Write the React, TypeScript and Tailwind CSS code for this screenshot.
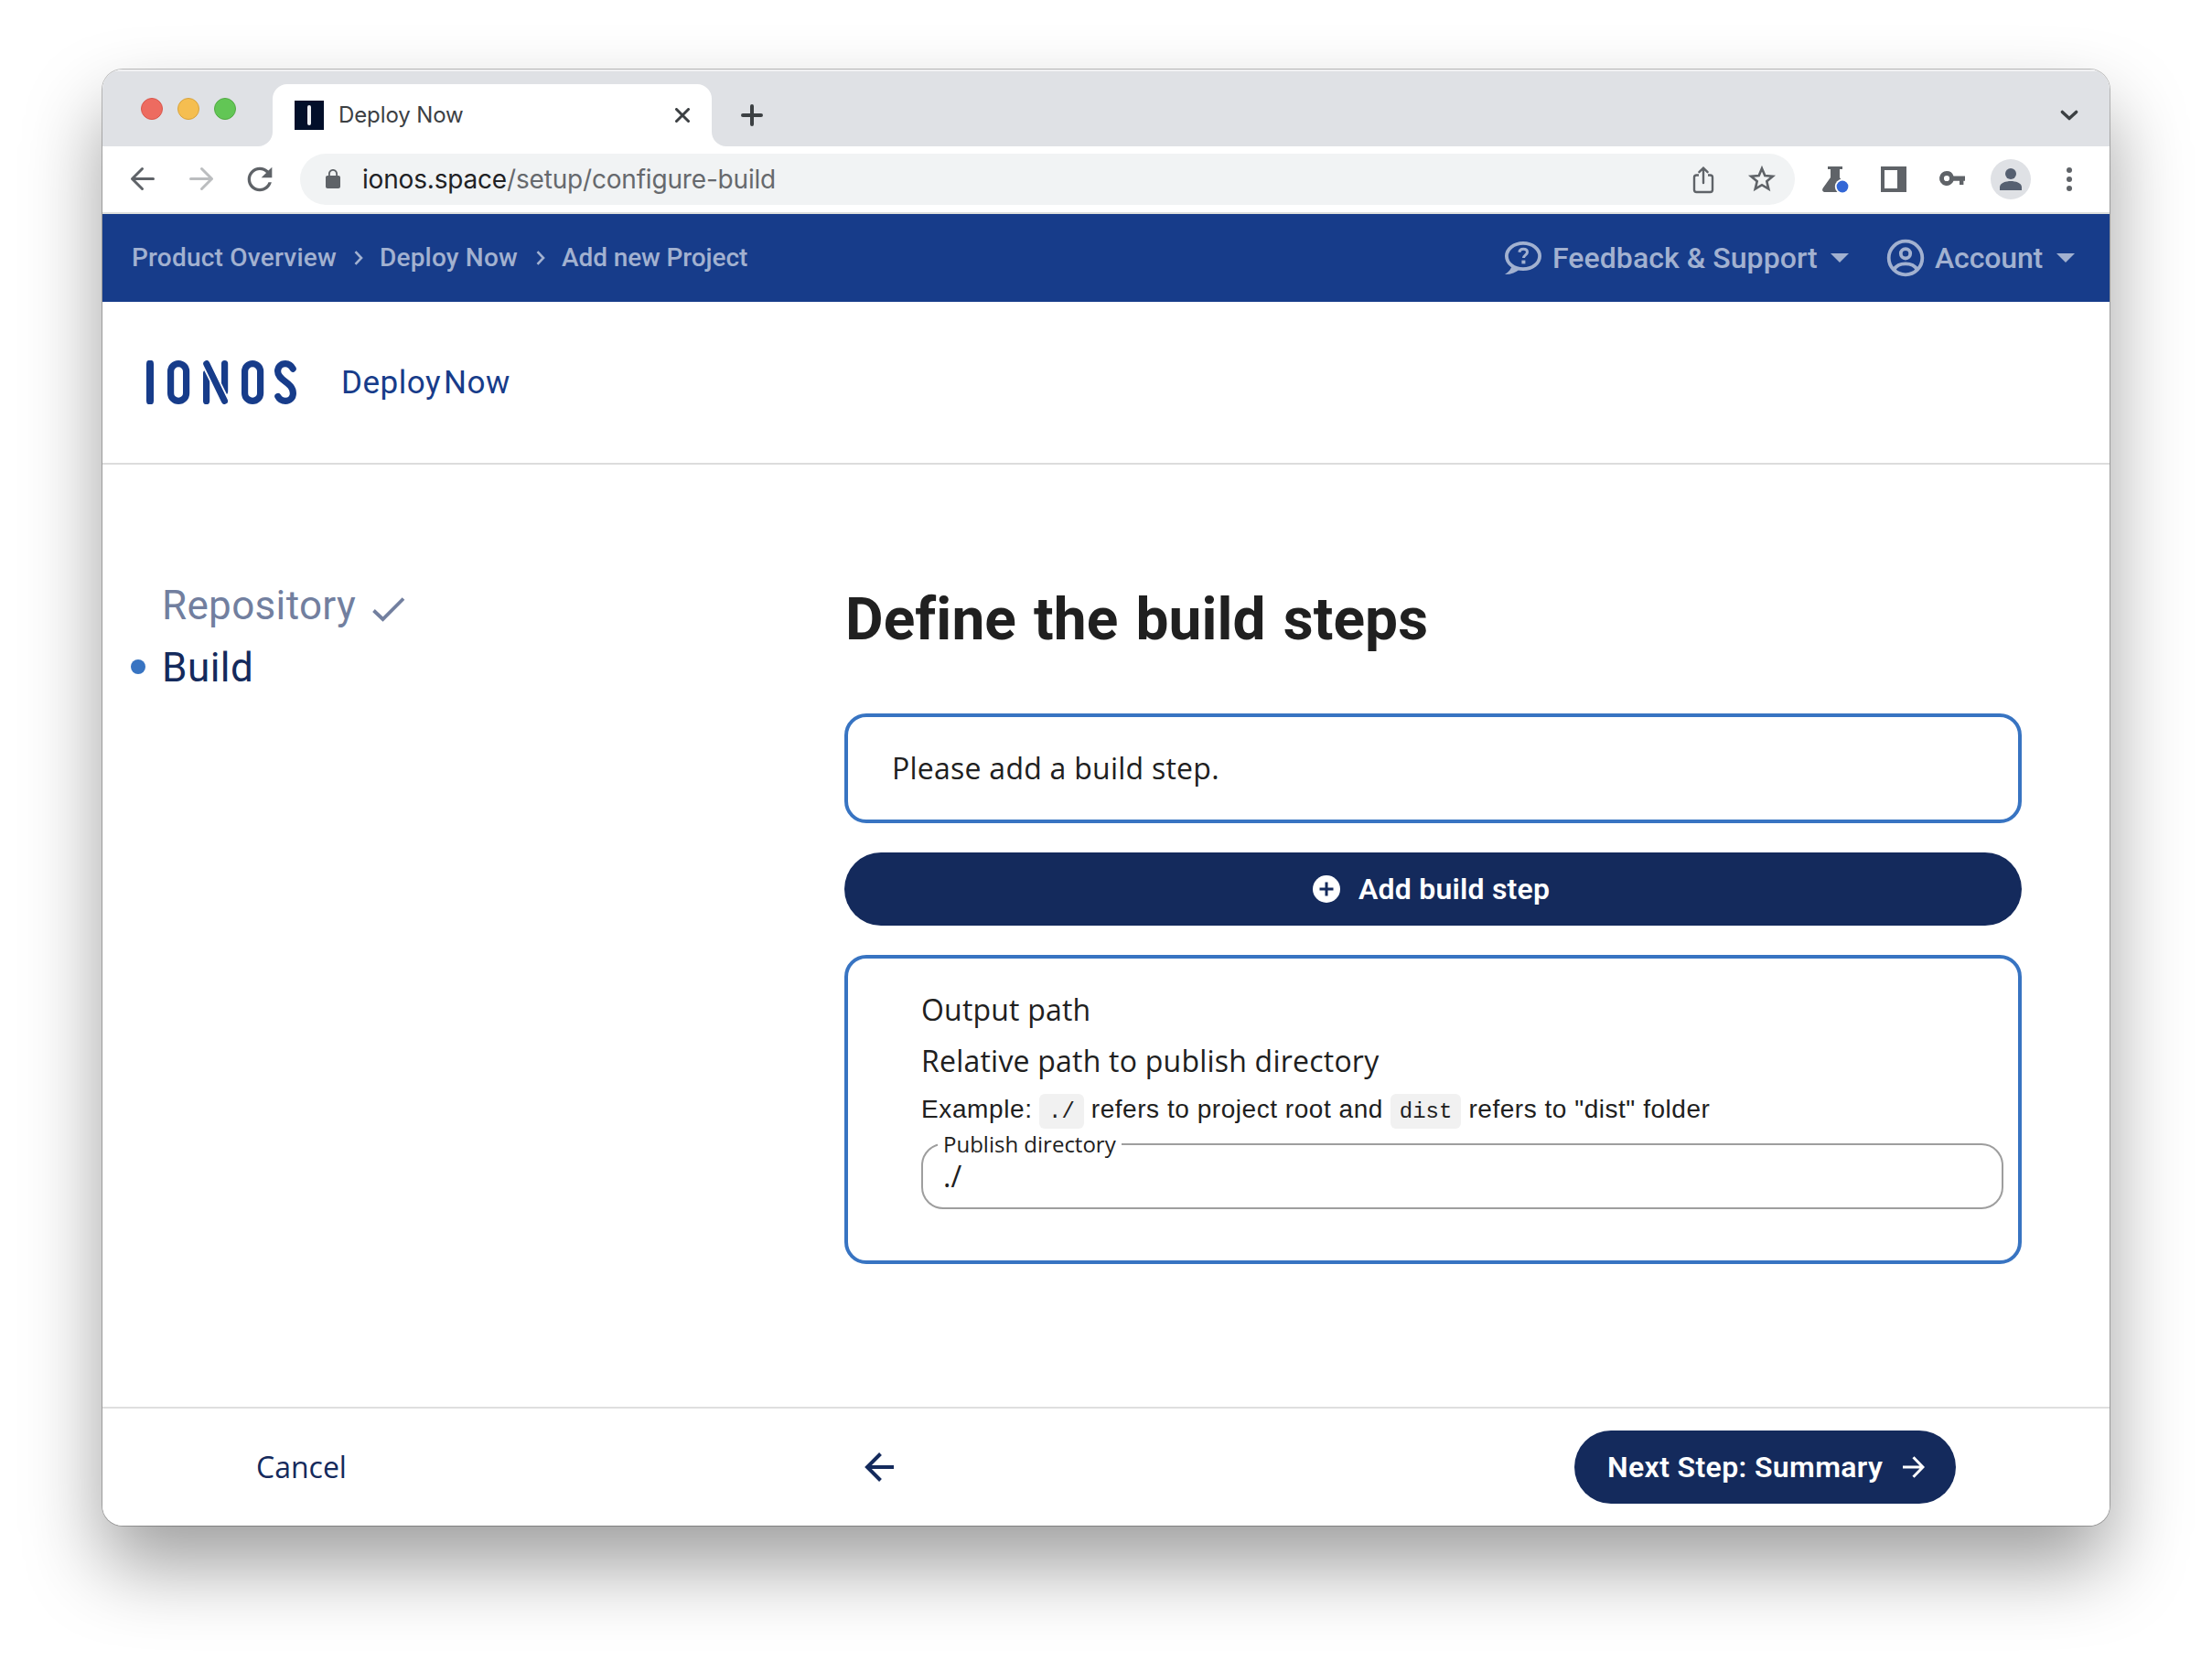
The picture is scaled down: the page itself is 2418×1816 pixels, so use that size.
import type { ReactNode } from "react";

function Glyph({ children, className = "" }: { children: ReactNode; className?: string }) {
  return (
    <svg viewBox="0 0 40 40" fill="none" className={`h-10 w-10 shrink-0 ${className}`}>
      {children}
    </svg>
  );
}

function Caret() {
  return (
    <svg viewBox="0 0 20 10" className="h-[10px] w-[20px] shrink-0" fill="currentColor">
      <path d="M0 0h20L10 10z" />
    </svg>
  );
}

function TabStrip() {
  return (
    <div className="flex h-[84px] items-end bg-[#dfe1e5] shadow-[inset_0_2px_0_rgba(255,255,255,0.55)]">
      <div className="mb-[29px] ml-[42px] flex gap-4">
        <span className="h-6 w-6 rounded-full border border-[#d9574c] bg-[#ed6b60]" />
        <span className="h-6 w-6 rounded-full border border-[#d8a33c] bg-[#f5be50]" />
        <span className="h-6 w-6 rounded-full border border-[#52a943] bg-[#62c655]" />
      </div>
      <svg viewBox="0 0 16 16" className="ml-[24px] h-4 w-4 shrink-0" fill="#fff">
        <path d="M16 0v16H0A16 16 0 0 0 16 0z" />
      </svg>
      <div className="flex h-[68px] w-[480px] items-center rounded-t-2xl bg-white pl-6">
        <div className="flex h-8 w-8 items-center justify-center bg-[#020f2a]">
          <span className="h-[22px] w-[4px] rounded-full bg-[#eef0f4]" />
        </div>
        <span className="ml-[16px] w-[368px] font-['Inter'] text-[24px] tracking-[-0.1px] text-[#3c4043]">Deploy Now</span>
        <svg viewBox="0 0 16 16" className="h-4 w-4" stroke="#3c4043" strokeWidth="3" strokeLinecap="round">
          <path d="M1.5 1.5l13 13M14.5 1.5l-13 13" />
        </svg>
      </div>
      <svg viewBox="0 0 16 16" className="h-4 w-4 shrink-0" fill="#fff">
        <path d="M0 0v16h16A16 16 0 0 1 0 0z" />
      </svg>
      <svg viewBox="0 0 24 24" className="mb-[22px] ml-4 h-6 w-6" stroke="#3c4043" strokeWidth="4" strokeLinecap="round">
        <path d="M12 2v20M2 12h20" />
      </svg>
      <svg viewBox="0 0 20 12" className="mb-[28px] ml-auto mr-[34px] h-3 w-5" fill="none" stroke="#3c4043" strokeWidth="3.4" strokeLinecap="round" strokeLinejoin="round">
        <path d="M2.4 2.4L10 9.6l7.600-7.200" />
      </svg>
    </div>
  );
}

function Toolbar() {
  return (
    <div className="flex h-[74px] items-center border-b-2 border-[#dcdfdc] px-6 text-[#5f6368]">
      <div className="flex gap-6">
        <Glyph>
          <path d="M31.500 19.500H8.500M19.500 8.500l-11 11 11 11" stroke="currentColor" strokeWidth="3" strokeLinecap="round" strokeLinejoin="round" />
        </Glyph>
        <Glyph className="text-[#bbbdbf]">
          <path d="M8.500 19.500h23M20.500 8.500l11 11-11 11" stroke="currentColor" strokeWidth="3" strokeLinecap="round" strokeLinejoin="round" />
        </Glyph>
        <svg viewBox="0 0 24 24" className="h-10 w-10" fill="currentColor">
          <path d="M17.65 6.35C16.2 4.9 14.21 4 12 4c-4.420 0-7.990 3.580-7.990 8s3.570 8 7.990 8c3.730 0 6.840-2.550 7.730-6h-2.080c-.820 2.330-3.040 4-5.650 4-3.310 0-6-2.690-6-6s2.690-6 6-6c1.660 0 3.140.690 4.220 1.780L13 11h7V4l-2.350 2.350z" />
        </svg>
      </div>
      <div className="ml-6 flex h-14 w-[1634px] items-center rounded-full bg-[#f1f3f4] pl-6 pr-4">
        <svg viewBox="0 0 24 24" className="h-6 w-6 shrink-0" fill="currentColor">
          <path d="M18 8h-1V6c0-2.760-2.240-5-5-5S7 3.240 7 6v2H6c-1.100 0-2 .900-2 2v10c0 1.100.900 2 2 2h12c1.100 0 2-.900 2-2V10c0-1.100-.900-2-2-2zM8.800 8V6c0-1.770 1.430-3.200 3.200-3.200s3.200 1.430 3.200 3.200v2z" />
        </svg>
        <span className="ml-[20px] font-['Inter'] text-[28px] tracking-[-0.18px] text-[#202124]">
          ionos.space<span className="text-[#66696d]">/setup/configure-build</span>
        </span>
        <div className="ml-auto flex gap-6">
          <Glyph>
            <path d="M15.500 15.500H13a2.500 2.500 0 0 0-2.500 2.500v13.500A2.500 2.500 0 0 0 13 34h15a2.500 2.500 0 0 0 2.500-2.500V18a2.500 2.500 0 0 0-2.500-2.500h-2.500" stroke="currentColor" strokeWidth="2.400" transform="translate(-.5 0)" />
            <path d="M20 24V8M15.400 12.200L20 7.600l4.600 4.600" stroke="currentColor" strokeWidth="2.400" strokeLinecap="round" />
          </Glyph>
          <Glyph>
            <path d="M20 8.200l3.300 7.900 8.500.7-6.500 5.500 2 8.300-7.300-4.400-7.300 4.400 2-8.300-6.500-5.500 8.500-.7z" stroke="currentColor" strokeWidth="2.600" />
          </Glyph>
        </div>
      </div>
      <div className="ml-6 flex items-center gap-6">
        <Glyph>
          <path d="M12 6h16v3h-3v9l7.500 11.500c1.500 2.500.5 4.500-2 4.500h-21c-3 0-4.300-2-2.700-4.500L15 18V9h-3z" fill="currentColor" />
          <circle cx="28" cy="28" r="8.200" fill="#fff" />
          <circle cx="28" cy="28" r="6.400" fill="#3367d6" />
        </Glyph>
        <Glyph>
          <path d="M6 6h28v28H6zM10 10v20h14V10z" fill="currentColor" fillRule="evenodd" />
        </Glyph>
        <Glyph>
          <path d="M14 11a8 8 0 1 0 7.500 10.800H28V26h4.400v-4.200H34v-5.400H21.500A8 8 0 0 0 14 11zm0 4.900a3.100 3.100 0 1 1 0 6.200 3.100 3.100 0 0 1 0-6.200z" fill="currentColor" fillRule="evenodd" />
        </Glyph>
        <svg viewBox="0 0 44 44" className="-mx-0.5 h-11 w-11">
          <circle cx="22" cy="22" r="22" fill="#dfe1e5" />
          <circle cx="22" cy="16" r="6" fill="#566071" />
          <path d="M10 34v-3.500c0-4.500 7-6.500 12-6.500s12 2 12 6.500V34z" fill="#566071" />
        </svg>
        <Glyph>
          <g fill="currentColor">
            <circle cx="20" cy="10" r="3" />
            <circle cx="20" cy="20" r="3" />
            <circle cx="20" cy="30" r="3" />
          </g>
        </Glyph>
      </div>
    </div>
  );
}

function CrumbArrow() {
  return (
    <svg viewBox="0 0 10 16" className="h-4 w-[10px]" fill="none" stroke="currentColor" strokeWidth="2.600">
      <path d="M1.500 1.200L8 8l-6.500 6.800" />
    </svg>
  );
}

function AccountBar() {
  return (
    <div className="flex h-24 items-center bg-[#173c8a] font-['Roboto'] font-medium text-[#a2b1d0]">
      <div className="flex items-center pl-[32px] text-[28px]">
        <span className="w-[243px] tracking-[0.22px]">Product Overview</span>
        <CrumbArrow />
        <span className="ml-[18px] w-[171px] tracking-[0.19px]">Deploy Now</span>
        <CrumbArrow />
        <span className="ml-[18px] tracking-[-0.1px]">Add new Project</span>
      </div>
      <div className="ml-auto flex items-center pr-[38px] text-[32px]">
        <svg viewBox="0 0 42 40" className="h-10 w-[42px]" fill="none" stroke="currentColor">
          <path d="M9 27c-.6 4.500-3.500 8.200-8 11 6.500.2 12-1.800 16-5.500z" fill="currentColor" stroke="none" />
          <ellipse cx="21" cy="18" rx="18.100" ry="14.200" fill="#173c8a" strokeWidth="3.800" />
          <path d="M16.800 13.800c.3-2.300 2-3.500 4.400-3.500 2.500 0 4.300 1.300 4.300 3.500 0 3-4 3.200-4 6.200" strokeWidth="3" />
          <rect x="19.400" y="22.600" width="4" height="3.800" fill="currentColor" stroke="none" />
        </svg>
        <span className="ml-[11px] w-[304px] tracking-[0.06px]">Feedback &amp; Support</span>
        <Caret />
        <svg viewBox="0 0 42 42" className="ml-[41px] h-[42px] w-[42px]" fill="none" stroke="currentColor" strokeWidth="3.800">
          <circle cx="21" cy="21" r="18.300" />
          <circle cx="21" cy="16.300" r="5.200" />
          <path d="M8.500 33.500C11 29 16 27.300 21 27.300s10 1.700 12.500 6.200" />
        </svg>
        <span className="ml-[11px] w-[133px] tracking-[-0.13px]">Account</span>
        <Caret />
      </div>
    </div>
  );
}

function BrandMark() {
  return (
    <svg viewBox="0 0 164 48" className="h-12 w-[164px]" fill="none" stroke="#173c8a" strokeWidth="7.200" strokeLinecap="round">
      <path d="M4 3.600v40.800" strokeWidth="8" />
      <rect x="26.600" y="3.600" width="17" height="40.800" rx="8.500" />
      <path d="M65.600 14v30.400M85.600 3.600V34" />
      <path d="M62.500 0L87.500 50" stroke="#fff" strokeWidth="10.500" strokeLinecap="butt" transform="translate(.6 -1)" />
      <path d="M65.800 3.700l19.600 40.600" />
      <rect x="107.600" y="3.600" width="17" height="40.800" rx="8.500" />
      <path d="M160.200 9.200c-1.800-3.600-4.600-5.600-8.200-5.600-5 0-8.400 3.600-8.400 8.400 0 10.500 16.800 11.500 16.800 24 0 4.900-3.600 8.400-8.400 8.400-3.600 0-6.600-1.900-8.200-5" />
    </svg>
  );
}

function Header() {
  return (
    <div className="flex h-[178px] items-center border-b-2 border-[#dcdcdc] pl-12">
      <BrandMark />
      <span className="ml-[49px] mt-[2px] font-['Roboto'] text-[35px] text-[#173c8a]">
        <span className="tracking-[0.5px]">Deploy</span>
        <span className="ml-[3px] tracking-[0.5px]">Now</span>
      </span>
    </div>
  );
}

function Steps() {
  return (
    <div className="w-[811px] pl-[31px] pt-[120px] font-['Roboto'] text-[44px] leading-[68px]">
      <div className="flex items-center pl-[34px] text-[#727f9f]">
        <span className="tracking-[0.33px]">Repository</span>
        <svg viewBox="0 0 36 28" className="ml-[18px] mt-[7px] h-7 w-9" fill="none" stroke="currentColor" strokeWidth="3.800">
          <path d="M1.500 15.500L11.500 25 34 2.500" />
        </svg>
      </div>
      <div className="flex items-center text-[#142a5c]">
        <span className="-mt-[2px] h-4 w-4 rounded-full bg-[#3874c2]" />
        <span className="ml-[18px] tracking-[0.5px]">Build</span>
      </div>
    </div>
  );
}

function OutputPath() {
  return (
    <section className="mt-8 h-[338px] rounded-[24px] border-4 border-[#3874c2] pl-[80px] pr-[16px] pt-7 font-['Open_Sans'] text-[32px] text-[#202020]">
      <p className="leading-[56px] tracking-[0.2px]">Output path</p>
      <p className="leading-[56px] tracking-[0.22px]">Relative path to publish directory</p>
      <div className="flex h-12 items-baseline whitespace-nowrap pt-px font-['Liberation_Sans'] text-[28px] leading-[48px]">
        <span className="w-[129px] tracking-[0.6px]">Example:</span>
        <code className="rounded-[6px] bg-[#f1f1f1] px-[10px] pt-[2px] font-['Liberation_Mono'] text-[24px] leading-[36px]">./</code>
        <span className="w-[335px] pl-2 tracking-[0.54px]">refers to project root and</span>
        <code className="rounded-[6px] bg-[#f1f1f1] px-[10px] pt-[2px] font-['Liberation_Mono'] text-[24px] leading-[36px]">dist</code>
        <span className="pl-2 tracking-[0.53px]">refers to "dist" folder</span>
      </div>
      <div className="relative mt-[14px] flex h-[72px] items-center rounded-[24px] border-2 border-[#9e9e9e] pl-[22px]">
        <label className="absolute -top-[17px] left-[16px] w-[201px] bg-white pl-[6px] text-[24px] leading-8">
          Publish directory
        </label>
        <span>./</span>
      </div>
    </section>
  );
}

function BuildForm() {
  return (
    <div className="w-[1287px] pt-[130px]">
      <h1 className="pl-px font-['Roboto'] text-[64px] font-bold leading-[80px] tracking-[0.1px] text-[#202020] [word-spacing:3px]">
        Define the build steps
      </h1>
      <div className="mt-[62px] flex h-[120px] items-center rounded-[24px] border-4 border-[#3874c2] pl-[48px] font-['Open_Sans'] text-[32px] tracking-[0.25px] text-[#202020]">
        Please add a build step.
      </div>
      <button className="mt-8 flex h-20 w-full items-center rounded-full bg-[#142a5c] pl-[512px] font-['Roboto'] text-[32px] font-semibold tracking-[0.21px] text-white">
        <svg viewBox="0 0 30 30" className="h-[30px] w-[30px]">
          <circle cx="15" cy="15" r="15" fill="#fff" />
          <path d="M15 7.500v15M7.500 15h15" stroke="#142a5c" strokeWidth="3" />
        </svg>
        <span className="ml-5">Add build step</span>
      </button>
      <OutputPath />
    </div>
  );
}

function Footer() {
  return (
    <div className="flex h-[130px] items-center border-t-2 border-[#dfdfdf] pr-[168px] text-[32px]">
      <span className="ml-[168px] w-[665px] font-['Open_Sans'] text-[#142a5c]">Cancel</span>
      <svg viewBox="0 0 32 32" className="h-8 w-8" fill="none" stroke="#142a5c" strokeWidth="4">
        <path d="M32 16H3M17.500 1.500L3 16l14.500 14.500" />
      </svg>
      <button className="ml-auto flex h-20 w-[417px] items-center rounded-full bg-[#142a5c] pl-[36px] font-['Roboto'] font-semibold text-white">
        <span className="w-[323px] text-left tracking-[0.36px]">Next Step: Summary</span>
        <svg viewBox="0 0 24 24" className="h-6 w-6" fill="none" stroke="#fff" strokeWidth="3">
          <path d="M0 12h22M11.500 1.200L22 12 11.500 22.800" />
        </svg>
      </button>
    </div>
  );
}

export default function App() {
  return (
    <div className="h-[1816px] w-[2418px] overflow-hidden bg-white px-[112px] pt-[76px]">
      <div className="flex h-[1592px] w-[2194px] flex-col rounded-[22px] shadow-[0_0_0_1px_rgba(0,0,0,0.25),0_44px_84px_rgba(0,0,0,0.38)]">
        <div className="flex h-full flex-col overflow-hidden rounded-[22px] bg-white">
          <TabStrip />
          <Toolbar />
          <AccountBar />
          <Header />
          <div className="flex flex-1">
            <Steps />
            <BuildForm />
          </div>
          <Footer />
        </div>
      </div>
    </div>
  );
}
